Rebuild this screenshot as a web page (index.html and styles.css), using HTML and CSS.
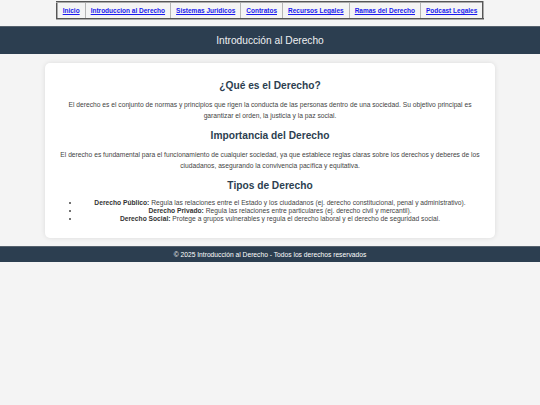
FILE: index.html
```html
<!DOCTYPE html>
<html lang="es">
<head>
<meta charset="utf-8">
<title>Introducción al Derecho</title>
<link rel="stylesheet" href="styles.css">
</head>
<body>
<nav class="nav">
  <table class="nav-table">
    <tr>
      <td><a href="#">Inicio</a></td>
      <td><a href="#">Introduccion al Derecho</a></td>
      <td><a href="#">Sistemas Juridicos</a></td>
      <td><a href="#">Contratos</a></td>
      <td><a href="#">Recursos Legales</a></td>
      <td><a href="#">Ramas del Derecho</a></td>
      <td><a href="#">Podcast Legales</a></td>
    </tr>
  </table>
</nav>
<header class="header">
  <h1 class="title">Introducción al Derecho</h1>
</header>
<main class="card">
  <h2 class="heading">¿Qué es el Derecho?</h2>
  <p class="text">El derecho es el conjunto de normas y principios que rigen la conducta de las personas dentro de una sociedad. Su objetivo principal es garantizar el orden, la justicia y la paz social.</p>
  <h2 class="heading">Importancia del Derecho</h2>
  <p class="text">El derecho es fundamental para el funcionamiento de cualquier sociedad, ya que establece reglas claras sobre los derechos y deberes de los ciudadanos, asegurando la convivencia pacífica y equitativa.</p>
  <h2 class="heading">Tipos de Derecho</h2>
  <ul class="list">
    <li><strong>Derecho Público:</strong> Regula las relaciones entre el Estado y los ciudadanos (ej. derecho constitucional, penal y administrativo).</li>
    <li><strong>Derecho Privado:</strong> Regula las relaciones entre particulares (ej. derecho civil y mercantil).</li>
    <li><strong>Derecho Social:</strong> Protege a grupos vulnerables y regula el derecho laboral y el derecho de seguridad social.</li>
  </ul>
</main>
<footer class="footer">© 2025 Introducción al Derecho - Todos los derechos reservados</footer>
</body>
</html>
```

FILE: styles.css
```css
html, body {
  margin: 0;
  padding: 0;
}
body {
  background: #f4f4f4;
  font-family: "Liberation Sans", Arial, sans-serif;
  font-size: 6.7px;
  color: #333;
}
.nav {
  display: flex;
  justify-content: center;
  padding-top: 1px;
}
.nav-table {
  border-collapse: collapse;
  border: 2px outset #aaa;
  background: #f4f4f4;
}
.nav-table td {
  border: 1px solid #b5b5b5;
  padding: 0 5px;
  height: 15px;
  text-align: center;
  white-space: nowrap;
}
.nav-table a {
  color: #1a1aee;
  font-weight: bold;
  font-size: 6.5px;
  text-decoration: underline;
}
.header {
  margin-top: 6px;
  height: 28px;
  background: #2c3e50;
  display: flex;
  align-items: center;
  justify-content: center;
  border-top: 1px solid #55616d;
  box-sizing: border-box;
}
.title {
  margin: 0;
  font-size: 10.2px;
  font-weight: normal;
  color: #eef0f2;
}
.card {
  display: block;
  margin: 9px 45px 0;
  background: #fff;
  border-radius: 5px;
  box-shadow: 0 0 5px rgba(0,0,0,0.1);
  padding: 16px 15px 15px;
  text-align: center;
}
.heading {
  margin: 0 0 7px;
  font-size: 10.2px;
  line-height: 13px;
  color: #2c3e50;
}
.text {
  margin: 0 0 8px;
  line-height: 11px;
  color: #444;
}
.list {
  margin: 0;
  padding-left: 20px;
  line-height: 8px;
  color: #444;
}
.list strong {
  color: #333;
}
.footer {
  margin-top: 8px;
  height: 16px;
  background: #2c3e50;
  color: #fff;
  display: flex;
  align-items: center;
  justify-content: center;
  border-top: 1px solid #55616d;
  box-sizing: border-box;
}
```
